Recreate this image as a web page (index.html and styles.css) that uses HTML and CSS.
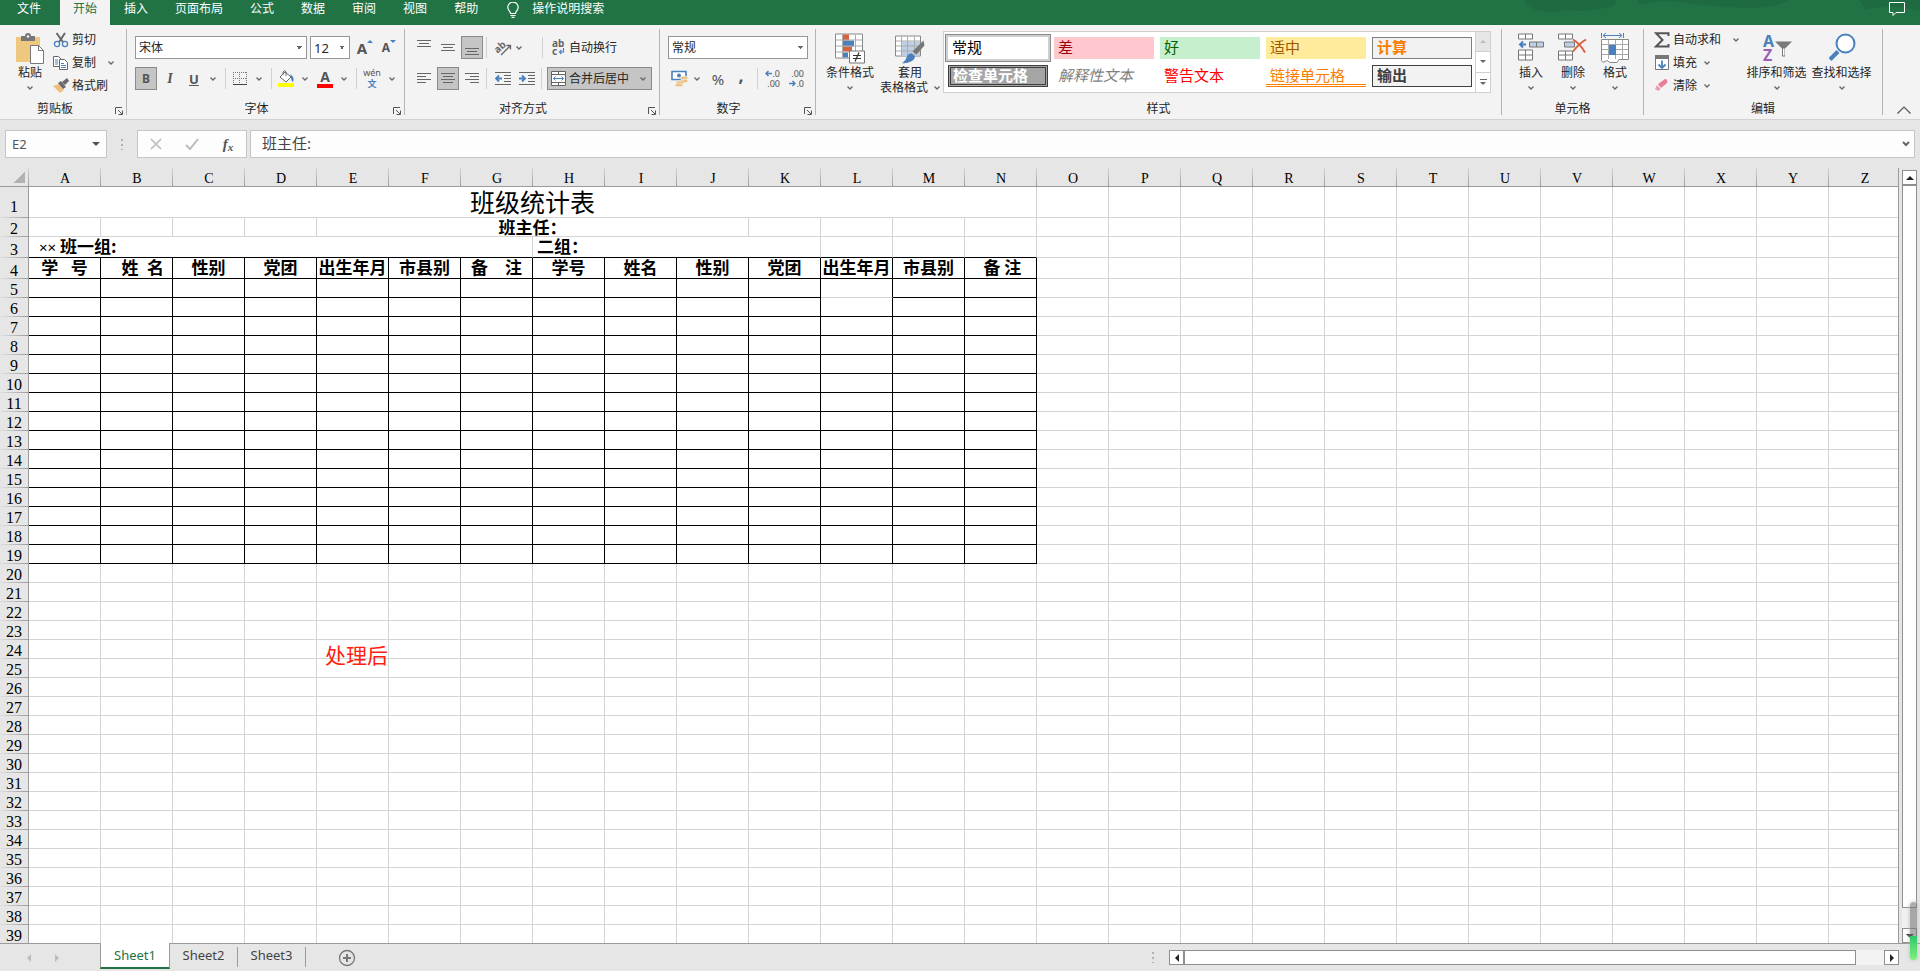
FILE: index.html
```html
<!DOCTYPE html>
<html lang="zh-CN">
<head>
  <meta charset="UTF-8" />
  <meta name="viewport" content="width=device-width, initial-scale=1.0"/>
  <title>班级统计表</title>
  <link rel="stylesheet" href="styles.css">
</head>
<body>

  <svg class="defs" width="0" height="0">
    <symbol id="chev" viewBox="0 0 6 4"><path d="M.5 .5 3 3 5.500 .5" fill="none" stroke="#666" stroke-width="1.300"/></symbol>
    <symbol id="launch" viewBox="0 0 8 8"><path d="M.5 7V.5H7M3 3l4 4M7.500 3.500v4h-4" fill="none" stroke="#555"/></symbol>
  </svg>

  <nav class="tabs">
    <a href="#" class="file">文件</a>
    <a href="#" class="active">开始</a>
    <a href="#">插入</a>
    <a href="#">页面布局</a>
    <a href="#">公式</a>
    <a href="#">数据</a>
    <a href="#">审阅</a>
    <a href="#">视图</a>
    <a href="#">帮助</a>
    <a href="#" class="tell">
      <svg width="12" height="16" viewBox="0 0 12 16" fill="none" stroke="#fff" stroke-width="1.200"><path d="M3.500 11.500C3.500 9 .8 8.500 .8 5.300a5.200 5.200 0 0 1 10.400 0c0 3.200-2.700 3.700-2.700 6.200zM3.500 13.500h5M4.500 15.400h3"/></svg>
      操作说明搜索
    </a>
    <svg class="swirl" width="400" height="25" viewBox="0 0 400 25" fill="#1e673f"><path d="M4 0h36v11q-30 3-36-11zM40 0h56q0 8-8 7-20 6-48 3zM118 0h152q-14 8-40 8-50-2-70-6-25-2-42 3zM338 0h62v11q-30-8-56-1 0-6-6-10z"/></svg>
    <button class="comment" aria-label="批注"><svg width="17" height="15" viewBox="0 0 17 15" fill="none" stroke="#fff"><path d="M.5 .5h15v10H7l-3 3v-3H.5z"/></svg></button>
  </nav>

  <div class="ribbon">
    <section class="group g-clip">
      <div class="body">
        <button class="big">
          <svg width="30" height="32" viewBox="0 0 30 32"><path d="M1 4h24v25H1z" fill="#edc87e"/><path d="M6 3h4a3 3 0 0 1 6 0h4v5H6z" fill="#777"/><circle cx="13" cy="3.500" r="1.200" fill="#fff"/><path d="M15.500 12.500h8l5 5v13h-13z" fill="#fff" stroke="#777"/><path d="M23.500 12.500v5h5" fill="none" stroke="#777"/></svg>
          <span>粘贴</span>
          <svg class="chev"><use href="#chev"/></svg>
        </button>
        <div class="stack">
          <button class="small"><svg width="16" height="16" viewBox="0 0 16 16" fill="none"><path d="M3.500 1l6.500 9M12 1L6 10" stroke="#666" stroke-width="2"/><circle cx="4" cy="12" r="2.600" stroke="#4a80bd" stroke-width="1.300"/><circle cx="12" cy="12" r="2.600" stroke="#4a80bd" stroke-width="1.300"/></svg>剪切</button>
          <button class="small"><svg width="16" height="16" viewBox="0 0 16 16" fill="#fff" stroke="#666"><path d="M.5 1.500h5l3 3v7h-8z"/><path d="M6.500 4.500h5l3 3v7h-8z"/><path d="M2 5h3M2 7h3M2 9h3M8 8.500h3M8 10.500h5M8 12.500h5" stroke="#4a80bd"/></svg>复制<svg class="chev"><use href="#chev"/></svg></button>
          <button class="small"><svg width="16" height="16" viewBox="0 0 16 16"><path d="M0 8l6-2 5 6-4 3z" fill="#edc080"/><path d="M5 5l3-2 5 6-3 2zM9 4l5-4 2 3-4 4z" fill="#6b6b6b"/></svg>格式刷</button>
        </div>
      </div>
      <h2>剪贴板</h2>
      <button class="launch" aria-label="剪贴板选项"><svg width="8" height="8"><use href="#launch"/></svg></button>
    </section>

    <section class="group g-font">
      <div class="rows">
        <div class="row">
          <select class="font-name" aria-label="字体"><option>宋体</option></select>
          <select class="font-size" aria-label="字号"><option>12</option></select>
          <button class="ic grow" aria-label="增大字号"><b>A</b><i class="up"></i></button>
          <button class="ic shrink" aria-label="减小字号"><b>A</b><i class="down"></i></button>
        </div>
        <div class="row">
          <button class="ic on"><b>B</b></button>
          <button class="ic it">I</button>
          <button class="ic un">U</button>
          <svg class="chev"><use href="#chev"/></svg>
          <span class="sep"></span>
          <button class="ic" aria-label="边框"><svg width="14" height="14" viewBox="0 0 14 14" stroke="#777" fill="none"><path d="M0 .5h14M0 6.500h14M.5 0v12M6.500 0v12M13.500 0v12" stroke-dasharray="1 1"/><path d="M0 12.500h14" stroke="#444"/></svg></button>
          <svg class="chev"><use href="#chev"/></svg>
          <span class="sep"></span>
          <button class="ic" aria-label="填充颜色"><svg width="16" height="17" viewBox="0 0 16 17"><path d="M2 7l5-5 6 5-5 5z" fill="#fff" stroke="#666"/><path d="M5 5V2q2-3 3 0v4" fill="none" stroke="#666"/><path d="M12 4q5 3 3 8-2-1-2-5z" fill="#4a80bd"/><path d="M0 13h16v4H0z" fill="#ff0"/></svg></button>
          <svg class="chev"><use href="#chev"/></svg>
          <button class="ic color" aria-label="字体颜色"><b>A</b></button>
          <svg class="chev"><use href="#chev"/></svg>
          <span class="sep"></span>
          <button class="ic wen"><span>wén</span><b>文</b></button>
          <svg class="chev"><use href="#chev"/></svg>
        </div>
      </div>
      <h2>字体</h2>
      <button class="launch" aria-label="字体选项"><svg width="8" height="8"><use href="#launch"/></svg></button>
    </section>

    <section class="group g-align">
      <div class="rows">
        <div class="row">
          <button class="ic" aria-label="顶端对齐"><svg width="14" height="16" viewBox="0 0 14 16" stroke="#666"><path d="M0 .5h14M2 3.500h10M0 6.500h14"/></svg></button>
          <button class="ic" aria-label="垂直居中"><svg width="14" height="16" viewBox="0 0 14 16" stroke="#666"><path d="M0 4.500h14M2 7.500h10M0 10.500h14"/></svg></button>
          <button class="ic on" aria-label="底端对齐"><svg width="14" height="16" viewBox="0 0 14 16" stroke="#666"><path d="M0 8.500h14M2 11.500h10M0 14.500h14"/></svg></button>
          <span class="sep"></span>
          <button class="ic" aria-label="方向"><svg width="20" height="20" viewBox="0 0 20 20"><text x="2" y="13" font-size="10" font-weight="bold" fill="#666" transform="rotate(-42 7 11)">ab</text><path d="M8 17l9-9M13.500 7.500H17.500V11.500" fill="none" stroke="#666" stroke-width="1.300"/></svg></button>
          <svg class="chev"><use href="#chev"/></svg>
          <span class="sep far"></span>
          <button class="wrap"><svg width="16" height="21" viewBox="0 0 16 21"><g font-size="10" font-weight="bold" fill="#666"><text x="1" y="10">ab</text><text x="1" y="18">c</text></g><path d="M12.500 11v4H8.500M10.500 13l-2 2 2 2" fill="none" stroke="#4a80bd" stroke-width="1.200"/></svg>自动换行</button>
        </div>
        <div class="row">
          <button class="ic" aria-label="左对齐"><svg width="14" height="11" viewBox="0 0 14 11" stroke="#666"><path d="M0 .5h14M0 3.500h9M0 6.500h14M0 9.500h9"/></svg></button>
          <button class="ic on" aria-label="居中"><svg width="14" height="11" viewBox="0 0 14 11" stroke="#666"><path d="M0 .5h14M2 3.500h10M0 6.500h14M2 9.500h10"/></svg></button>
          <button class="ic" aria-label="右对齐"><svg width="14" height="11" viewBox="0 0 14 11" stroke="#666"><path d="M0 .5h14M5 3.500h9M0 6.500h14M5 9.500h9"/></svg></button>
          <span class="sep"></span>
          <button class="ic" aria-label="减少缩进"><svg width="16" height="13" viewBox="0 0 16 13"><path d="M0 .5h16M9 3.500h7M9 6.500h7M9 9.500h7M0 12.500h16" stroke="#666"/><path d="M7 6.500H1.500M4 3.500l-3 3 3 3" fill="none" stroke="#4a80bd" stroke-width="1.800"/></svg></button>
          <button class="ic" aria-label="增加缩进"><svg width="16" height="13" viewBox="0 0 16 13"><path d="M0 .5h16M9 3.500h7M9 6.500h7M9 9.500h7M0 12.500h16" stroke="#666"/><path d="M0 6.500h5.500M3 3.500l3 3-3 3" fill="none" stroke="#4a80bd" stroke-width="1.800"/></svg></button>
          <span class="sep"></span>
          <button class="wrap on"><svg width="16" height="15" viewBox="0 0 16 15" fill="#fff" stroke="#666"><path d="M.5 .5h14v14H.5zM.5 3.500h14M.5 11.500h14M7.500 .5v3M7.500 11.500v3"/><path d="M2.500 7.500h10M4.500 5.500l-2 2 2 2M10.500 5.500l2 2-2 2" fill="none" stroke="#4a80bd"/></svg>合并后居中<svg class="chev"><use href="#chev"/></svg></button>
        </div>
      </div>
      <h2>对齐方式</h2>
      <button class="launch" aria-label="对齐选项"><svg width="8" height="8"><use href="#launch"/></svg></button>
    </section>

    <section class="group g-num">
      <div class="rows">
        <div class="row"><select class="num-fmt" aria-label="数字格式"><option>常规</option></select></div>
        <div class="row">
          <button class="ic" aria-label="会计数字格式"><svg width="17" height="17" viewBox="0 0 17 17"><path d="M1 1.500h14v8H1z" fill="#fff" stroke="#4a80bd" stroke-width="1.600"/><circle cx="8" cy="5.500" r="2" fill="#4a80bd"/><g fill="#edc080" stroke="#f3f3f3" stroke-width=".6"><ellipse cx="13" cy="8" rx="4" ry="1.800"/><ellipse cx="13" cy="11" rx="4" ry="1.800"/><ellipse cx="9" cy="12.500" rx="4" ry="1.800"/><ellipse cx="8" cy="15" rx="4" ry="1.800"/></g></svg></button>
          <svg class="chev"><use href="#chev"/></svg>
          <button class="ic pct">%</button>
          <button class="ic com">,</button>
          <span class="sep"></span>
          <button class="ic dec" aria-label="增加小数位数"><span><svg width="7" height="7" viewBox="0 0 7 7"><path d="M7 3.500H1M3.500 1L1 3.500 3.500 6" fill="none" stroke="#4a80bd" stroke-width="1.500"/></svg>.0</span><span>.00</span></button>
          <button class="ic dec" aria-label="减少小数位数"><span>.00</span><span><svg width="7" height="7" viewBox="0 0 7 7"><path d="M0 3.500h6M3.500 1L6 3.500 3.500 6" fill="none" stroke="#4a80bd" stroke-width="1.500"/></svg>.0</span></button>
        </div>
      </div>
      <h2>数字</h2>
      <button class="launch" aria-label="数字选项"><svg width="8" height="8"><use href="#launch"/></svg></button>
    </section>

    <section class="group g-style">
      <div class="body">
        <button class="big">
          <svg width="30" height="31" viewBox="0 0 30 31"><path d="M.5 .5h27v24H.5z" fill="#fff" stroke="#888"/><path d="M8 1h6v6H8zM8 13h9v5H8z" fill="#d8623e"/><path d="M8 7h11v6H8zM8 19h5v5H8z" fill="#4a80bd"/><path d="M1 6.500h26M1 12.500h26M1 18.500h26M7.500 1v23M20.500 1v23" stroke="#aaa" fill="none"/><path d="M14.500 17.500h15v12h-15z" fill="#fff" stroke="#777"/><path d="M18 22h8M18 25h8M24 19l-4 9" stroke="#333" stroke-width="1.200"/></svg>
          <span>条件格式</span>
          <svg class="chev"><use href="#chev"/></svg>
        </button>
        <button class="big fmt">
          <svg width="30" height="31" viewBox="0 0 30 31"><path d="M.5 2.500h25v20H.5z" fill="#fff" stroke="#888"/><path d="M7 8h18v14H7z" fill="#bdd0e6"/><path d="M1 7.500h24M1 12.500h24M1 17.500h24M6.500 3v19M12.500 3v19M19.500 3v19" stroke="#aaa"/><path d="M28.500 7l1 5-8 9-4-3z" fill="#777"/><path d="M17 20l3 3q0 6-13 7 4-3 5-7 2-4 5-3z" fill="#4a80bd"/></svg>
          <span>套用</span>
          <span>表格格式 <svg class="chev"><use href="#chev"/></svg></span>
        </button>
        <div class="gallery">
          <div class="cells">
            <button class="st normal">常规</button>
            <button class="st bad">差</button>
            <button class="st good">好</button>
            <button class="st neutral">适中</button>
            <button class="st calc">计算</button>
            <button class="st check">检查单元格</button>
            <button class="st explain">解释性文本</button>
            <button class="st warn">警告文本</button>
            <button class="st linked">链接单元格</button>
            <button class="st output">输出</button>
          </div>
          <div class="gscroll">
            <button class="off" aria-label="上一行"><i class="up"></i></button>
            <button aria-label="下一行"><i class="down"></i></button>
            <button class="more" aria-label="其他"><i class="down"></i></button>
          </div>
        </div>
      </div>
      <h2>样式</h2>
    </section>

    <section class="group g-cells">
      <div class="body">
        <button class="big">
          <svg width="28" height="31" viewBox="0 0 28 31" fill="#fff" stroke="#777"><path d="M1.500 .5h14v5h-14zM8.500 .5v5M1.500 16.500h14v10h-14zM8.500 16.500v10M1.500 21.500h14"/><path d="M12.500 8.500h14v5h-14zM19.500 8.500v5" fill="#bdd0e6"/><path d="M9 11H3M6 8l-3 3 3 3" fill="none" stroke="#4a80bd" stroke-width="2"/></svg>
          <span>插入</span>
          <svg class="chev"><use href="#chev"/></svg>
        </button>
        <button class="big">
          <svg width="30" height="31" viewBox="0 0 30 31" fill="#fff" stroke="#777"><path d="M.5 .5h14v5H.5zM7.500 .5v5M.5 17.500h14v9H.5zM7.500 17.500v9M.5 21.500h14"/><path d="M6.500 8.500h10v5h-10z" fill="#bdd0e6"/><path d="M15 6q7 4 12 13M28 6q-7 4-13 12" fill="none" stroke="#d8623e" stroke-width="2"/></svg>
          <span>删除</span>
          <svg class="chev"><use href="#chev"/></svg>
        </button>
        <button class="big">
          <svg width="28" height="32" viewBox="0 0 28 32" fill="none"><path d="M.5 0v5M22.500 0v5M2 2.500h19M5 0L2 2.500 5 5M18 0l3 2.500L18 5" stroke="#4a80bd"/><path d="M.5 6.500h27v20H18l-2 3H9l-3-2-4 2-1.500-2z" fill="#fff" stroke="#888"/><path d="M1 11.500h26M1 21.500h26M7.500 7v19M14.500 7v19M21.500 7v19M1 16.500h26" stroke="#aaa"/><path d="M8 12h7v10H8z" fill="#4a80bd"/></svg>
          <span>格式</span>
          <svg class="chev"><use href="#chev"/></svg>
        </button>
      </div>
      <h2>单元格</h2>
    </section>

    <section class="group g-edit">
      <div class="body">
        <div class="stack">
          <button class="small sum"><svg width="16" height="16" viewBox="0 0 16 16"><path d="M14.500 4V1.200H2L8.500 8 2 14.500h12.500V12" fill="none" stroke="#555" stroke-width="2"/></svg>自动求和<svg class="chev"><use href="#chev"/></svg></button>
          <button class="small"><svg width="16" height="16" viewBox="0 0 16 16"><path d="M1.500 1.500h13v13h-13z" fill="#fff" stroke="#777"/><path d="M1 0h14v4H1z" fill="#777"/><path d="M8 5.500V13M4.500 9.500L8 13l3.500-3.500" fill="none" stroke="#4a80bd" stroke-width="1.800"/></svg>填充<svg class="chev"><use href="#chev"/></svg></button>
          <button class="small"><svg width="16" height="16" viewBox="0 0 16 16"><path d="M4 6l7-5q3 0 2 4L7 10z" fill="#e87e96"/><path d="M3 7l3.500 4-2 2L1 11z" fill="#ee9db0"/></svg>清除<svg class="chev"><use href="#chev"/></svg></button>
        </div>
        <button class="big">
          <svg width="30" height="31" viewBox="0 0 30 31"><g font-size="16" font-weight="bold"><text x="1" y="13" fill="#4a80bd">A</text><text x="1" y="27" fill="#9b5fb8">Z</text></g><path d="M13 8h17l-7 7v8h-3v-8z" fill="#7a7a7a"/><path d="M21 15h1.500v7H21z" fill="#fff"/></svg>
          <span>排序和筛选</span>
          <svg class="chev"><use href="#chev"/></svg>
        </button>
        <button class="big">
          <svg width="30" height="31" viewBox="0 0 30 31"><path d="M3 26L11 18" stroke="#4a80bd" stroke-width="4"/><circle cx="18.500" cy="10" r="9" fill="#fff" stroke="#4a80bd" stroke-width="2"/></svg>
          <span>查找和选择</span>
          <svg class="chev"><use href="#chev"/></svg>
        </button>
      </div>
      <h2>编辑</h2>
    </section>

    <button class="collapse" aria-label="折叠功能区"><svg width="14" height="8" viewBox="0 0 14 8"><path d="M.5 7.500L7 1l6.500 6.500" fill="none" stroke="#555" stroke-width="1.200"/></svg></button>
  </div>

  <div class="formula-bar">
    <div class="name-box"><input type="text" value="E2" aria-label="名称框"><i class="down"></i></div>
    <span class="dots"></span>
    <div class="fx">
      <button aria-label="取消"><svg width="12" height="12" viewBox="0 0 12 12"><path d="M1 1l10 10M11 1L1 11" stroke="#bbb" stroke-width="1.600"/></svg></button>
      <button aria-label="输入"><svg width="14" height="12" viewBox="0 0 14 12"><path d="M1 7l4 4 8-10" fill="none" stroke="#bbb" stroke-width="2"/></svg></button>
      <button class="fn">f<sub>x</sub></button>
    </div>
    <div class="formula"><input type="text" value="班主任:" aria-label="编辑栏"><svg width="8" height="6" viewBox="0 0 8 6"><path d="M1 1l3 3 3-3" fill="none" stroke="#666" stroke-width="2"/></svg></div>
  </div>

  <main class="work">
    <div class="sheet">
      <table id="grid"></table>
      <p class="note">处理后</p>
    </div>
    <div class="vscroll">
      <button aria-label="向上滚动"><i class="up"></i></button>
      <div class="thumb"></div>
      <button class="end" aria-label="向下滚动"><i class="down"></i></button>
    </div>
  </main>

  <footer class="bottom">
    <button class="nav" aria-label="上一张工作表"><i class="left"></i></button>
    <button class="nav" aria-label="下一张工作表"><i class="right"></i></button>
    <a href="#" class="sheet-tab active">Sheet1</a>
    <a href="#" class="sheet-tab">Sheet2</a>
    <a href="#" class="sheet-tab">Sheet3</a>
    <button class="add" aria-label="新工作表"><svg width="18" height="18" viewBox="0 0 18 18" fill="none" stroke="#777"><circle cx="9" cy="9" r="7.500" stroke-width="1.300"/><path d="M9 5v8M5 9h8" stroke-width="2"/></svg></button>
    <span class="dots"></span>
    <div class="hscroll">
      <button aria-label="向左滚动"><i class="left"></i></button>
      <div class="thumb"></div>
      <button class="end" aria-label="向右滚动"><i class="right"></i></button>
    </div>
  </footer>

  <div class="meter"></div>

  <script src="grid.js"></script>
</body>
</html>
```

FILE: styles.css
```css
* { box-sizing: border-box; margin: 0; padding: 0; }
body {
  height: 100vh;
  display: flex;
  flex-direction: column;
  overflow: hidden;
  position: relative;
  background: #e6e6e6;
  color: #262626;
  font-family: "Noto Sans", "Noto Sans CJK SC", sans-serif;
  font-size: 12px;
  line-height: 16px;
}
button, input, select { font: inherit; color: inherit; border: 0; background: none; }
a { color: inherit; text-decoration: none; }
svg { display: block; flex: none; }
.defs { position: absolute; }

/* small triangles */
i { display: block; width: 0; height: 0; border: 3px solid transparent; flex: none; }
i.up { border-bottom-color: currentColor; border-top: 0; }
i.down { border-top-color: currentColor; border-bottom: 0; }
i.left { border: 4px solid transparent; border-right-color: currentColor; border-left: 0; }
i.right { border: 4px solid transparent; border-left-color: currentColor; border-right: 0; }
.chev { width: 6px; height: 4px; }

/* tabs */
.tabs {
  position: relative;
  display: flex;
  gap: 1px;
  height: 25px;
  background: #217346;
  color: #fff;
}
.tabs a { padding: 0 13px 7px; line-height: 18px; height: 25px; }
.tabs .file { padding: 0 18px 7px 17px; }
.tabs .active { background: #f3f3f3; color: #217346; }
.tabs .tell { display: flex; gap: 13px; padding-left: 15px; }
.tell svg { margin-top: 2px; }
.swirl { position: absolute; right: 0; top: 0; opacity: .6; }
.comment { position: relative; margin: 2px 14px 0 auto; height: 15px; }

/* ribbon */
.ribbon {
  display: flex;
  height: 95px;
  padding: 4px 0;
  background: #f3f3f3;
  border-bottom: 1px solid #d2d2d2;
}
.group {
  position: relative;
  display: flex;
  flex-direction: column;
  justify-content: space-between;
  border-right: 1px solid #b5b5b5;
  flex: none;
}
.group h2 { font-size: 12px; font-weight: normal; text-align: center; line-height: 12px; }
.launch { position: absolute; right: 3px; bottom: 0; }
.g-clip { width: 127px; }
.g-font { width: 278px; }
.g-align { width: 255px; }
.g-num { width: 156px; }
.g-style { width: 686px; }
.g-cells { width: 142px; }
.g-edit { width: 239px; }
.g-clip h2 { padding-right: 16px; }
.g-font h2, .g-align h2, .g-num h2 { padding-right: 18px; }

.body { display: flex; align-items: flex-start; }
.big {
  display: flex;
  flex-direction: column;
  align-items: center;
  padding-top: 4px;
  line-height: 15px;
  white-space: nowrap;
}
.big > svg:first-child { height: 32px; }
.big > span { display: flex; align-items: center; gap: 6px; }
.big > .chev { margin-top: 6px; }
.g-clip .big { width: 48px; padding-left: 12px; }
.g-clip .stack { padding-left: 5px; }
.stack { display: flex; flex-direction: column; gap: 2px; }
.small { display: flex; align-items: center; gap: 3px; height: 21px; white-space: nowrap; }
.small .chev { margin-left: 4px; }
.g-clip .small .chev, .sum .chev { margin-left: 9px; }

.rows { display: flex; flex-direction: column; gap: 8px; padding: 7px 0 0 8px; }
.row { display: flex; align-items: center; height: 23px; }
.sep { width: 1px; height: 21px; background: #d0d0d0; flex: none; }

select {
  appearance: none;
  flex: none;
  height: 23px;
  padding: 0 3px;
  border: 1px solid #969696;
  background: conic-gradient(from -45deg at 50% 100%, #666 90deg, transparent 0) right 4px center / 6px 3px no-repeat #fff;
  background: linear-gradient(to bottom left, #666 50%, transparent 50%) right 7px center / 3px 3px no-repeat, linear-gradient(to bottom right, #666 50%, transparent 50%) right 4px center / 3px 3px no-repeat #fff;
}
.font-name { width: 172px; }
.font-size { width: 40px; margin: 0 3px; font-size: 13px; }
.num-fmt { width: 140px; }

.ic {
  display: flex;
  align-items: center;
  justify-content: center;
  width: 22px;
  height: 23px;
  flex: none;
  color: #555;
}
.ic.on, .wrap.on { background: #c5c5c5; border: 1px solid #8a8a8a; }
.ic.it { width: 26px; font: italic bold 14px "Liberation Serif", serif; }
.ic.un { font-weight: bold; font-size: 13px; text-decoration: underline; }
.grow { font-size: 15px; width: 24px; }
.shrink { font-size: 12px; width: 24px; }
.grow i, .shrink i { color: #4a80bd; margin-bottom: 12px; }
.color b { border-bottom: 4px solid #f00; width: 16px; font-size: 14px; line-height: 14px; }
.wen { flex-direction: column; font-size: 9px; line-height: 10px; width: 24px; }
.wen b { color: #4a80bd; line-height: 11px; }
.g-font .chev { margin: 0 6px 0 5px; }
.g-font .sep { margin: 0 3px; }
.g-align .ic { margin-right: 2px; }
.g-align .sep { margin: 0 5px 0 1px; }
.g-align .sep.far { margin-left: 20px; }
.wrap { display: flex; align-items: center; gap: 2px; height: 23px; padding: 0 3px; white-space: nowrap; }
.wrap .chev { margin-left: 9px; }
.wrap.on { width: 105px; }
.g-num .chev { margin: 0 4px; }
.g-num .sep { margin: 0 4px 0 7px; }
.pct { font-size: 15px; width: 28px; }
.com { font-size: 18px; font-weight: bold; width: 18px; padding-bottom: 8px; }
.dec { flex-direction: column; font-size: 9px; line-height: 10px; align-items: flex-end; width: 18px; margin-right: 6px; }
.dec span { display: flex; align-items: center; }

/* cell styles */
.g-style .body { padding-left: 6px; }
.g-style .big { width: 56px; }
.g-style .fmt { width: 62px; margin-right: 3px; padding-left: 2px; }
.gallery { display: flex; width: 548px; height: 62px; margin-top: 2px; background: #fff; border: 1px solid #cfcfcf; }
.cells { display: grid; grid-template-columns: repeat(5, 100px); gap: 6px; padding: 5px 3px 0 4px; align-content: start; }
.st { height: 22px; padding: 0 4px 3px; font-size: 15px; line-height: 16px; text-align: left; }
.normal { background: #fff; color: #000; outline: 2px solid #cfcfcf; box-shadow: 0 0 0 3px #8a8a8a; }
.bad { background: #ffc7ce; color: #9c0006; }
.good { background: #c6efce; color: #006100; }
.neutral { background: #ffeb9c; color: #9c5700; }
.calc { background: #f2f2f2; color: #fa7d00; border: 1px solid #7f7f7f; font-weight: bold; }
.check { background: #a5a5a5; color: #fff; border: 3px double #3f3f3f; font-weight: bold; padding: 0 2px 2px; line-height: 14px; }
.explain { color: #7f7f7f; font-style: italic; }
.warn { color: #f00; }
.linked { color: #fa7d00; border-bottom: 3px double #ff8001; padding-bottom: 0; }
.output { background: #f2f2f2; color: #3f3f3f; border: 1px solid #3f3f3f; font-weight: bold; }
.gscroll { display: flex; flex-direction: column; width: 15px; border-left: 1px solid #cfcfcf; margin-left: auto; }
.gscroll button { flex: 1; display: flex; flex-direction: column; align-items: center; justify-content: center; gap: 2px; color: #666; }
.gscroll button + button { border-top: 1px solid #cfcfcf; }
.gscroll .off { background: #e6e6e6; color: #bbb; }
.more::before { content: ""; width: 7px; height: 1px; background: #666; }

.g-cells .body { padding-left: 8px; }
.g-cells .big { width: 42px; }
.g-edit .stack { width: 100px; padding-left: 10px; }
.g-edit .big { width: 65px; }
.collapse { margin: 0 9px 1px auto; align-self: flex-end; }

/* formula bar */
.formula-bar { display: flex; align-items: center; padding: 10px 5px; height: 48px; flex: none; }
.name-box, .fx, .formula { display: flex; align-items: center; height: 28px; background: #fdfdfd; border: 1px solid #c6c6c6; }
.name-box { width: 102px; padding: 0 6px; color: #555; }
.name-box input { flex: 1; min-width: 0; font-size: 13px; }
.name-box i { border-width: 4px 4px 0; }
.dots { width: 2px; height: 11px; background: repeating-linear-gradient(#b0b0b0 0 2px, transparent 2px 5px); flex: none; }
.formula-bar .dots { margin: 0 14px; }
.fx { width: 110px; margin-right: 3px; }
.fx button { flex: 1; display: flex; justify-content: center; }
.fx .fn { font: italic bold 15px "Liberation Serif", serif; color: #555; }
.fn sub { font-size: 11px; align-self: flex-end; }
.formula { flex: 1; padding: 0 4px 0 11px; color: #444; }
.formula input { flex: 1; font-size: 15px; line-height: 20px; padding-bottom: 3px; }

/* grid */
.work { flex: 1; min-height: 0; display: flex; gap: 3px; padding-right: 3px; }
.sheet { position: relative; flex: 1; min-width: 0; overflow: hidden; border-right: 1px solid #9b9b9b; background: #fff; }
table { table-layout: fixed; width: 1901px; border-collapse: separate; border-spacing: 0; }
.c-head { width: 29px; }
.c-cell { width: 72px; }
thead tr { height: 19px; }
tbody tr { height: 19px; }
tbody .r1 { height: 31px; }
tbody .r3, tbody .r4 { height: 21px; }
th {
  background: #e6e6e6;
  color: #000;
  font: 16px/16px "Liberation Serif", serif;
  vertical-align: bottom;
  border: 0 solid #9b9b9b;
}
thead th {
  font-size: 14px;
  line-height: 14px;
  border-bottom-width: 1px;
  background: linear-gradient(#d5d5d5, #9b9b9b) right / 1px 100% no-repeat #e6e6e6;
}
thead th:first-child { vertical-align: middle; }
thead .corner { width: 11px; height: 11px; margin-left: 14px; background: linear-gradient(135deg, transparent 50%, #b2b2b2 50%); }
tbody th { border-right-width: 1px; background: linear-gradient(90deg, #e0e0e0, #9b9b9b) bottom / 100% 1px no-repeat #e6e6e6; }
.r1 th { padding-bottom: 3px; }
td {
  border: 0 solid #d4d4d4;
  border-width: 0 1px 1px 0;
  color: #000;
  font: bold 17px/16px "Noto Sans CJK SC", sans-serif;
  text-align: center;
  white-space: pre;
}
.r3 td, .r4 td { padding-bottom: 2px; }
td.box { border-color: #000; }
td.under { border-bottom-color: #000; }
td.open { border-bottom-color: #d4d4d4; }
td.title { font-size: 25px; line-height: 26px; font-weight: normal; padding-bottom: 2px; }
td.left { text-align: left; padding-left: 4px; }
td.first { padding-left: 10px; }
td small { font-family: "Noto Sans", sans-serif; font-size: 15px; line-height: 10px; font-weight: normal; }
.note { position: absolute; left: 325px; top: 473px; font-size: 21px; line-height: 28px; color: #ff1e10; }

.vscroll { width: 15px; margin-top: 2px; display: flex; flex-direction: column; background: #f0f0f0; }
.vscroll button, .hscroll button, .thumb { background: #fff; border: 1px solid #8f8f8f; display: flex; align-items: center; justify-content: center; color: #222; }
.vscroll button { height: 15px; }
.vscroll i { border-width: 0 4px 4px; }
.vscroll .end i { border-width: 4px 4px 0; }
.thumb { flex: 1; }
.vscroll .end { margin-top: 20px; }

/* sheet tabs */
.bottom { display: flex; align-items: center; height: 28px; border-top: 1px solid #9b9b9b; flex: none; padding-right: 21px; }
.nav { width: 28px; color: #bbb; display: flex; justify-content: center; }
.nav:first-child { margin-left: 15px; }
.nav + .sheet-tab { margin-left: 29px; }
.sheet-tab { width: 68px; height: 20px; margin-top: 3px; padding-bottom: 4px; align-self: flex-start; text-align: center; font-size: 13px; line-height: 16px; color: #444; border-right: 1px solid #9b9b9b; }
.sheet-tab.active { position: relative; width: 70px; height: 26px; margin-top: -1px; padding-top: 4px; background: #fff; color: #217346; border: solid #9b9b9b; border-width: 0 1px; border-bottom: 2px solid #217346; }
.add { margin-left: 32px; }
.bottom .dots { margin-left: auto; margin-right: 15px; }
.hscroll { display: flex; flex: 0 1 730px; height: 15px; background: #f3f3f3; }
.hscroll button { width: 15px; }
.hscroll .end { margin-left: 28px; }

/* floating level indicator */
.meter { position: absolute; right: 3px; bottom: 11px; width: 7px; height: 58px; border-radius: 4px; background: linear-gradient(rgba(120,120,120,.6) 34px, #2fc96b 34px, #7ff07f); box-shadow: 0 0 4px #bbb; }
```

FILE: grid.js
```js
const COLS = 'ABCDEFGHIJKLMNOPQRSTUVWXYZ'.split('');
const ROWS = 39;

// anchor cell -> text, width in columns, class
const cells = {
  A1: { text: '班级统计表', span: 14, cls: 'title' },
  E2: { text: '班主任：', span: 6 },
  A3: { text: '<small>×× </small>班一组:', span: 7, cls: 'left first' },
  H3: { text: '二组：', span: 4, cls: 'left' }
};
const heads = ['学\u2002 号', '\u2002 姓\u2002名', '性别', '党团', '出生年月', '市县别', '备\u2003注',
  '学号', '姓名', '性别', '党团', '出生年月', '市县别', ' 备 注'];
heads.forEach((text, i) => { cells[COLS[i] + 4] = { text: text }; });

let html = '<colgroup><col class="c-head">' + '<col class="c-cell">'.repeat(26) + '</colgroup>';
html += '<thead><tr><th><div class="corner"></div></th>';
COLS.forEach(c => { html += `<th>${c}</th>`; });
html += '</tr></thead><tbody>';

for (let r = 1; r <= ROWS; r++) {
  html += `<tr class="r${r}"><th>${r}</th>`;
  for (let c = 0; c < COLS.length; c++) {
    const cell = cells[COLS[c] + r] || { text: '' };
    const span = cell.span || 1;
    const cls = [cell.cls || ''];
    if (c < 14 && r === 3) cls.push('under');
    if (c < 14 && r >= 4 && r <= 19) cls.push('box');
    if (r === 5 && COLS[c] === 'L') cls.push('open');
    html += `<td class="${cls.join(' ').trim()}" colspan="${span}">${cell.text}</td>`;
    c += span - 1;
  }
  html += '</tr>';
}

document.getElementById('grid').innerHTML = html + '</tbody>';
```
